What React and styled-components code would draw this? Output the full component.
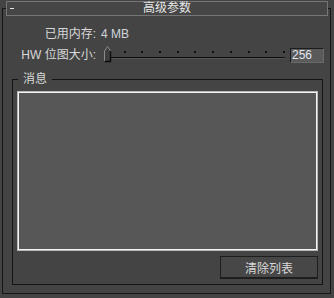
import styled, { createGlobalStyle } from "styled-components";

const GlobalStyle = createGlobalStyle`
  html, body {
    margin: 0;
    padding: 0;
    background: #444444;
    font-family: "Liberation Sans", "Noto Sans CJK SC", sans-serif;
    font-size: 12px;
    color: #d8d8d8;
  }
`;

const Panel = styled.div`
  margin: 8px 3px 0 2px;
  border: 1px solid #161616;
  background: #444444;
`;

const Header = styled.div`
  margin: -8px 2px 0 3px;
  height: 13px;
  border: 1px solid #767676;
  background: #464646;
  display: flex;
  align-items: center;
`;

const Collapse = styled.span`
  width: 4px;
  height: 1px;
  margin-left: 3px;
  background: #e6e6e6;
`;

const Title = styled.span`
  flex: 1;
  text-align: center;
  margin-right: 7px;
  line-height: 13px;
  color: #e8e8e8;
`;

const Settings = styled.div`
  display: grid;
  grid-template-columns: 93px auto;
  column-gap: 5px;
  row-gap: 5px;
  margin-top: 11px;
  align-items: center;
`;

const Label = styled.span`
  text-align: right;
  line-height: 14px;
  white-space: nowrap;
`;

const Value = styled.span`
  line-height: 14px;
  color: #d0d4dc;
`;

const SliderRow = styled.div`
  display: flex;
  align-items: center;
  height: 18px;
`;

const SliderBox = styled.div`
  position: relative;
  width: 181px;
  height: 18px;
  margin-left: 3px;
`;

const Ticks = styled.div`
  position: absolute;
  left: 2px;
  right: 0;
  top: 5px;
  display: flex;
  justify-content: space-between;
`;

const Tick = styled.i`
  width: 2px;
  height: 2px;
  background: #0e0e0e;
`;

const Track = styled.div`
  position: absolute;
  left: 6px;
  right: 0;
  top: 11px;
  height: 1px;
  background: #0e0e0e;
  border-bottom: 1px solid #565656;
`;

const Thumb = styled.svg`
  position: absolute;
  left: 0;
  top: 0;
`;

const Spinner = styled.div`
  width: 31px;
  height: 13px;
  margin-left: 5px;
  border: 1px solid #1c1c1c;
  border-right-color: #6a6a6a;
  border-bottom-color: #6a6a6a;
  background: #5a5a5a;
  color: #e2e6f0;
  line-height: 13px;
  padding-left: 1px;
`;

const Group = styled.fieldset`
  margin: 8px 7px 8px 9px;
  padding: 5px 4px 5px 4px;
  border: 1px solid #141414;
  display: flex;
  flex-direction: column;
  align-items: flex-end;
  gap: 5px;
`;

const Legend = styled.legend`
  margin-left: 1px;
  padding: 0 5px;
  line-height: 14px;
  color: #d8d8d8;
`;

const MessageList = styled.div`
  height: 156px;
  border: 1px solid #b8b8b8;
  box-shadow: inset 0 0 0 1px #f4f4f4;
  padding: 1px;
  background: #575757;
  align-self: stretch;
`;

const Button = styled.button`
  width: 98px;
  height: 23px;
  margin: 0;
  padding: 0;
  border: 1px solid #1e1e1e;
  border-bottom-width: 2px;
  background: #474747;
  color: #d8d8d8;
  font-family: inherit;
  font-size: 12px;
`;

const ticks = Array.from({ length: 11 });

export default function App() {
  return (
    <>
      <GlobalStyle />
      <Panel>
        <Header>
          <Collapse />
          <Title>高级参数</Title>
        </Header>
        <Settings>
          <Label>已用内存:</Label>
          <Value>4 MB</Value>
          <Label>HW 位图大小:</Label>
          <SliderRow>
            <SliderBox>
              <Ticks>
                {ticks.map((_, i) => (
                  <Tick key={i} />
                ))}
              </Ticks>
              <Track />
              <Thumb width="8" height="17" viewBox="0 0 8 17">
                <polygon points="0.5,5 3.5,0.5 6.5,5 6.5,15.5 0.5,15.5" fill="#3e3e3e" />
                <polyline points="0.5,15.5 0.5,5 3.5,0.5 6.5,5" fill="none" stroke="#8a8a8a" strokeWidth="1" />
                <polyline points="6.5,5 6.5,15.5 0.5,15.5" fill="none" stroke="#0c0c0c" strokeWidth="1.4" />
              </Thumb>
            </SliderBox>
            <Spinner>256</Spinner>
          </SliderRow>
        </Settings>
        <Group>
          <Legend>消息</Legend>
          <MessageList />
          <Button>清除列表</Button>
        </Group>
      </Panel>
    </>
  );
}
